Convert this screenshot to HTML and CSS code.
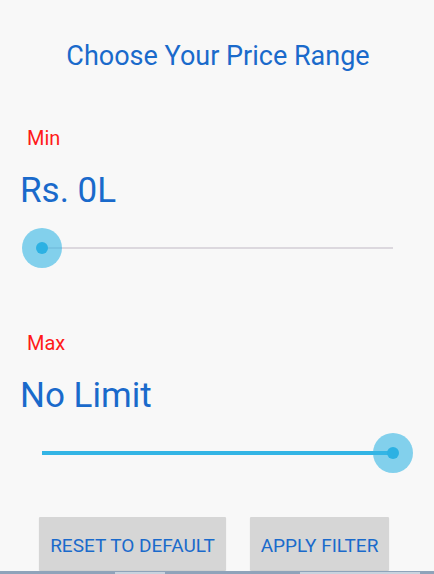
FILE: index.html
```html
<!DOCTYPE html>
<html>
<head>
<meta charset="utf-8">
<link rel="stylesheet" href="styles.css">
</head>
<body>
<div class="screen">
  <h1 class="title">Choose Your Price Range</h1>

  <section class="range range-min">
    <div class="label">Min</div>
    <div class="value">Rs. 0L</div>
    <div class="slider">
      <div class="track"><div class="fill" style="width:0%"></div></div>
      <div class="thumb" style="left:0%"><span class="dot"></span></div>
    </div>
  </section>

  <section class="range range-max">
    <div class="label">Max</div>
    <div class="value">No Limit</div>
    <div class="slider">
      <div class="track"><div class="fill" style="width:100%"></div></div>
      <div class="thumb" style="left:100%"><span class="dot"></span></div>
    </div>
  </section>

  <div class="actions">
    <button class="btn btn-reset">RESET TO DEFAULT</button>
    <button class="btn btn-apply">APPLY FILTER</button>
  </div>
</div>
<div class="navstrip">
  <span class="seg s1"></span><span class="seg s2"></span><span class="seg s3"></span><span class="seg s4"></span><span class="seg s5"></span>
</div>
</body>
</html>
```

FILE: styles.css
```css
* { box-sizing: border-box; }
html, body { margin: 0; padding: 0; }
body {
  width: 434px;
  height: 574px;
  overflow: hidden;
  background: #f8f8f8;
  font-family: Roboto, "Noto Sans", sans-serif;
  display: flex;
  flex-direction: column;
}
.screen {
  flex: 1;
  display: flex;
  flex-direction: column;
  padding-top: 40px;
}
.title {
  margin: 0;
  font-weight: 400;
  font-size: 27px;
  line-height: 32px;
  color: #1a6acb;
  text-align: center;
  padding-left: 2px;
}
.range {
  display: flex;
  flex-direction: column;
}
.range-min { margin-top: 54px; }
.range-max { margin-top: 63px; }
.label {
  font-size: 20px;
  line-height: 24px;
  color: #ff1a1a;
  padding-left: 27px;
}
.value {
  margin-top: 21px;
  font-size: 35px;
  line-height: 40px;
  color: #1a6acb;
  padding-left: 20px;
}
.slider {
  position: relative;
  margin-top: 17px;
  margin-left: 22px;
  width: 391px;
  height: 40px;
  display: flex;
  align-items: center;
  padding: 0 20px;
}
.track {
  flex: 1;
  height: 2px;
  background: #dcd8de;
  display: flex;
}
.range-max .track { height: 4px; }
.fill {
  height: 100%;
  background: #33b5e5;
}
.thumb {
  position: absolute;
  top: 0;
  width: 40px;
  height: 40px;
  border-radius: 50%;
  background: rgba(51, 181, 229, 0.6);
  display: flex;
  align-items: center;
  justify-content: center;
}
.range-max .thumb { left: auto !important; right: 0; }
.dot {
  width: 12px;
  height: 12px;
  border-radius: 50%;
  background: #2cb1e3;
}
.actions {
  margin-top: 44px;
  margin-left: 39px;
  display: flex;
  gap: 24px;
}
.btn {
  height: 53px;
  border: none;
  border-radius: 1px;
  background: #d6d6d6;
  box-shadow: 0 1px 1px rgba(0,0,0,0.18);
  color: #1a6acb;
  font-family: Roboto, "Noto Sans", sans-serif;
  font-size: 19px;
  padding: 3px 0 0;
}
.btn-reset { width: 187px; }
.btn-apply { width: 139px; }
.navstrip {
  height: 3px;
  background: #8fa3ba;
  display: flex;
}
.seg { height: 100%; }
.s1 { width: 115px; }
.s2 { width: 50px; background: #c9d3de; margin-top: 1px; }
.s3 { width: 135px; }
.s4 { width: 60px; background: #c9d3de; margin-top: 1px; }
.s5 { width: 60px; background: #c9d3de; margin-top: 1px; }
```
